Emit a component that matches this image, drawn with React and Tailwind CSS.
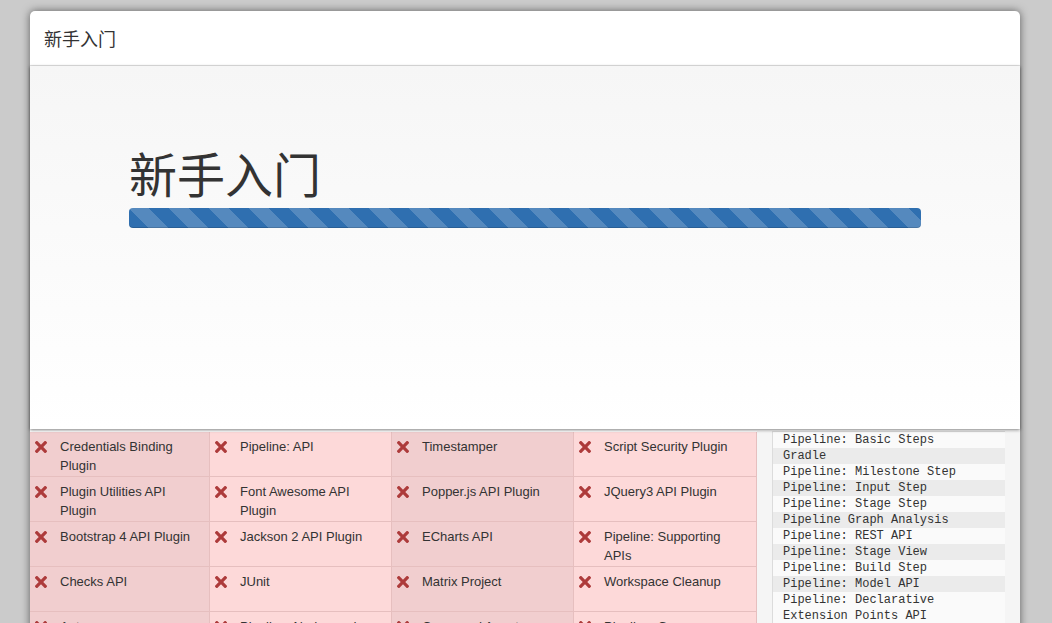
import React from 'react';

const plugins = [
  ['Credentials Binding Plugin', 'Pipeline: API', 'Timestamper', 'Script Security Plugin'],
  ['Plugin Utilities API Plugin', 'Font Awesome API Plugin', 'Popper.js API Plugin', 'JQuery3 API Plugin'],
  ['Bootstrap 4 API Plugin', 'Jackson 2 API Plugin', 'ECharts API', 'Pipeline: Supporting APIs'],
  ['Checks API', 'JUnit', 'Matrix Project', 'Workspace Cleanup'],
  ['Ant', 'Pipeline: Nodes and Processes', 'Command Agent Launcher', 'Pipeline: Groovy'],
];

const log = [
  'Pipeline: Basic Steps',
  'Gradle',
  'Pipeline: Milestone Step',
  'Pipeline: Input Step',
  'Pipeline: Stage Step',
  'Pipeline Graph Analysis',
  'Pipeline: REST API',
  'Pipeline: Stage View',
  'Pipeline: Build Step',
  'Pipeline: Model API',
  'Pipeline: Declarative Extension Points API',
  'Apache HttpComponents Client 4.x API',
];

const colWidths = ['w-[180px]', 'w-[182px]', 'w-[182px]', 'w-[183px]'];

const FailIcon = () => (
  <svg width="12" height="12" viewBox="0 80 352 352" className="text-[#ad3b3b]">
    <path
      fill="currentColor"
      d="M242.72 256l100.07-100.07c12.28-12.28 12.28-32.19 0-44.48l-22.24-22.24c-12.28-12.28-32.19-12.28-44.48 0L176 189.28 75.93 89.21c-12.28-12.28-32.19-12.28-44.48 0L9.21 111.45c-12.28 12.28-12.28 32.19 0 44.48L109.28 256 9.21 356.07c-12.28 12.28-12.28 32.19 0 44.48l22.24 22.24c12.28 12.28 32.2 12.28 44.48 0L176 322.72l100.07 100.07c12.28 12.28 32.2 12.28 44.48 0l22.24-22.24c12.28-12.28 12.28-32.19 0-44.48L242.72 256z"
    />
  </svg>
);

export default function App() {
  return (
    <div className="h-[623px] overflow-hidden bg-[#cbcbcb] pt-[11px] pl-[30px] pr-[32px] font-['Liberation_Sans','Noto_Sans_CJK_SC',sans-serif] text-[#333]">
      <div className="h-[640px] bg-white rounded-t-[5px] shadow-[0_0_8px_rgba(0,0,0,0.55)] flex flex-col">
        {/* header */}
        <div className="h-[55px] shrink-0 flex items-center pl-[14px] border-b border-[#e5e5e5] text-[18px] font-['Noto_Sans_CJK_SC',sans-serif]">
          新手入门
        </div>

        {/* progress panel */}
        <div className="relative z-10 h-[363px] shrink-0 px-[99px] pt-[80px] bg-gradient-to-b from-[#f6f6f6] to-white shadow-[0_1px_3px_rgba(0,0,0,0.5)]">
          <h1 className="text-[48px] leading-[53px] font-['Noto_Sans_CJK_SC',sans-serif] font-normal mb-[9px]">
            新手入门
          </h1>
          <div className="h-[20px] rounded-[4px] bg-[#2f6fb0] bg-[linear-gradient(45deg,rgba(255,255,255,.18)_25%,transparent_25%,transparent_50%,rgba(255,255,255,.18)_50%,rgba(255,255,255,.18)_75%,transparent_75%,transparent)] bg-[length:40px_40px] shadow-[inset_0_-1px_0_rgba(0,0,0,0.15)]"></div>
        </div>

        {/* plugins + log */}
        <div className="flex flex-1 pt-[2px]">
          <div className="w-[727px] shrink-0 pt-[1px]">
            {plugins.map((row, r) => (
              <div key={r} className="flex">
                {row.map((name, c) => (
                  <div
                    key={c}
                    className={`${colWidths[c]} h-[45px] flex items-start pl-[5px] pt-[5px] pr-[8px] border-b border-r border-[#e6bfbf] ${
                      c % 2 === 0 ? 'bg-[#f1cecf]' : 'bg-[#fdd9d9]'
                    }`}
                  >
                    <span className="h-[19px] w-[12px] mr-[13px] shrink-0 flex items-center">
                      <FailIcon />
                    </span>
                    <span className="text-[13px] leading-[19px]">{name}</span>
                  </div>
                ))}
              </div>
            ))}
          </div>
          <div className="flex-1 bg-[#f5f5f5] px-[15px]">
            <div className="border-l border-t border-[#dcdcdc] font-['Liberation_Mono',monospace] text-[12px] leading-[16px] text-[#333]">
              {log.map((line, i) => (
                <div key={i} className={`pl-[10px] pr-[6px] ${i % 2 === 0 ? 'bg-[#fafafa]' : 'bg-[#ebebeb]'}`}>
                  {line}
                </div>
              ))}
            </div>
          </div>
        </div>
      </div>
    </div>
  );
}
